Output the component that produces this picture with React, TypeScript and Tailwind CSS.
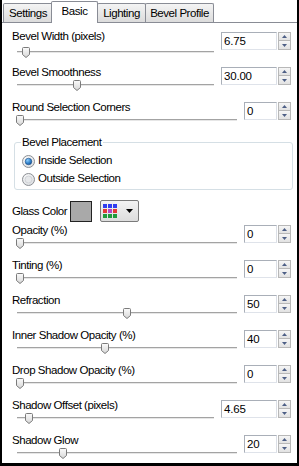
import React from 'react';

// Glass effect dialog – "Basic" page
type RowData = {
  label: string;
  value: string;
  wide?: boolean;
  thumb: number;
  first?: boolean;
};

const topRows: RowData[] = [
  { label: 'Bevel Width (pixels)', value: '6.75', wide: true, thumb: 5, first: true },
  { label: 'Bevel Smoothness', value: '30.00', wide: true, thumb: 56 },
  { label: 'Round Selection Corners', value: '0', thumb: -1 },
];

const bottomRows: RowData[] = [
  { label: 'Opacity (%)', value: '0', thumb: -1 },
  { label: 'Tinting (%)', value: '0', thumb: -1 },
  { label: 'Refraction', value: '50', thumb: 106 },
  { label: 'Inner Shadow Opacity (%)', value: '40', thumb: 84 },
  { label: 'Drop Shadow Opacity (%)', value: '0', thumb: -1 },
  { label: 'Shadow Offset (pixels)', value: '4.65', wide: true, thumb: 8 },
  { label: 'Shadow Glow', value: '20', thumb: 42 },
];

function Tab({ label, className, selected }: { label: string; className: string; selected?: boolean }) {
  if (selected) {
    return (
      <div
        className={`relative z-10 -mb-px flex h-[22px] items-center justify-center rounded-t-[2px] border-x border-t border-[#898c95] bg-white pb-[1px] ${className}`}
      >
        {label}
      </div>
    );
  }
  return (
    <div
      className={`flex h-[19px] items-center justify-center rounded-t-[2px] border-x border-t border-[#898c95] bg-gradient-to-b from-[#f4f4f4] to-[#dcdcdc] pt-[1px] ${className}`}
    >
      {label}
    </div>
  );
}

function Arrow({ up }: { up?: boolean }) {
  return (
    <svg width="5" height="3" viewBox="0 0 5 3">
      <path d={up ? 'M0 3 L2.5 0 L5 3 Z' : 'M0 0 L2.5 3 L5 0 Z'} fill="#4d5f86" />
    </svg>
  );
}

function Spinner({ value, wide, first }: { value: string; wide?: boolean; first?: boolean }) {
  return (
    <div className={`flex h-[18px] gap-[1px] ${first ? 'mt-[3px]' : 'mt-[2px]'}`}>
      <div
        className={`h-[18px] border border-[#a9afb8] border-r-[#dbdfe6] border-b-[#dfe3ea] bg-white pl-[2px] text-[11.5px] leading-[16px] tracking-[-0.2px] text-black ${wide ? 'w-[56px]' : 'w-[33px]'}`}
      >
        {value}
      </div>
      <div className="flex w-[13px] flex-col">
        <div className="flex h-[9px] items-center justify-center border border-[#b8b8b8] bg-gradient-to-b from-[#f6f6f6] to-[#e2e2e2]">
          <Arrow up />
        </div>
        <div className="flex h-[9px] items-center justify-center border border-t-0 border-[#b8b8b8] bg-gradient-to-b from-[#f6f6f6] to-[#e2e2e2]">
          <Arrow />
        </div>
      </div>
    </div>
  );
}

function Thumb() {
  return (
    <svg width="8" height="11" viewBox="0 0 8 11">
      <defs>
        <linearGradient id="tg" x1="0" y1="0" x2="0" y2="1">
          <stop offset="0" stopColor="#fbfbfb" />
          <stop offset="1" stopColor="#d6d6d6" />
        </linearGradient>
      </defs>
      <path
        d="M1.5 0.5 H6.5 A1 1 0 0 1 7.5 1.5 V7.5 L4 10.5 L0.5 7.5 V1.5 A1 1 0 0 1 1.5 0.5 Z"
        fill="url(#tg)"
        stroke="#7b7b7b"
      />
    </svg>
  );
}

function Row({ label, value, wide, thumb, first }: RowData) {
  return (
    <div className={`flex gap-[7px] ${first ? 'h-[36px]' : 'h-[35px]'}`}>
      <div className="flex-1">
        <div className="h-[14px] leading-[14px] whitespace-nowrap">{label}</div>
        <div className={`relative ml-[5px] h-[16px] ${first ? 'mt-[3px]' : ''}`}>
          <div className="absolute left-0 right-0 top-[5px] h-[2px] border-t border-b border-t-[#a3a3a3] border-b-[#e6e6e6]" />
          <div className="absolute top-[1px] flex" style={{ left: thumb }}>
            <Thumb />
          </div>
        </div>
      </div>
      <Spinner value={value} wide={wide} first={first} />
    </div>
  );
}

function Radio({ checked }: { checked?: boolean }) {
  return (
    <svg width="13" height="13" viewBox="0 0 13 13">
      <defs>
        <radialGradient id="rb" cx="0.4" cy="0.35" r="0.7">
          <stop offset="0" stopColor="#ffffff" />
          <stop offset="1" stopColor="#d9dcdf" />
        </radialGradient>
        <radialGradient id="rd" cx="0.35" cy="0.3" r="0.8">
          <stop offset="0" stopColor="#8fd0ff" />
          <stop offset="0.6" stopColor="#2f7fc8" />
          <stop offset="1" stopColor="#174b8c" />
        </radialGradient>
      </defs>
      <circle cx="6.5" cy="6.5" r="6" fill="url(#rb)" stroke="#8c8f94" />
      {checked ? (
        <circle cx="6.5" cy="6.5" r="3.3" fill="url(#rd)" stroke="#1d4f86" strokeWidth="0.6" />
      ) : (
        <circle cx="6.5" cy="6.5" r="3.5" fill="#e6e8ea" stroke="#c9ccd0" strokeWidth="0.8" />
      )}
    </svg>
  );
}

const gridColors = [
  '#2f3cf0', '#2f3cf0', '#2f3cf0',
  '#e23838', '#b544c8', '#e23838',
  '#1f9a3c', '#1f9a3c', '#1f9a3c',
];

export default function App() {
  return (
    <div className="h-[466px] w-[299px] overflow-hidden border-x-2 border-b-[3px] border-black bg-white font-['Liberation_Sans',Arial,sans-serif] text-[11.5px] tracking-[-0.45px] text-black">
      <div className="flex h-[22px] items-end pl-[1px]">
        <Tab label="Settings" className="w-[50px]" />
        <Tab label="Basic" className="-ml-[2px] w-[47px]" selected />
        <Tab label="Lighting" className="-ml-px w-[49px]" />
        <Tab label="Bevel Profile" className="-ml-px w-[69px]" />
      </div>

      <div className="border-t border-[#898c95] pl-[10px] pr-[6px] pt-[6px]">
        {topRows.map((r) => (
          <Row key={r.label} {...r} />
        ))}

        <fieldset className="-mr-[2px] ml-[2px] h-[55px] rounded-[3px] border border-[#d5dfe5] px-[6px]">
          <legend className="px-[1px] leading-[14px]">Bevel Placement</legend>
          <div className="mt-[5px] flex h-[14px] items-center gap-[3px] pl-[1px]">
            <Radio checked />
            <span>Inside Selection</span>
          </div>
          <div className="mt-[4px] flex h-[14px] items-center gap-[3px] pl-[1px]">
            <Radio />
            <span>Outside Selection</span>
          </div>
        </fieldset>

        <div className="mt-[9px] flex h-[24px] items-center">
          <span className="w-[58px] leading-[14px]">Glass Color</span>
          <div className="h-[21px] w-[22px] border border-[#222] bg-[#a9a9a9]" />
          <div className="ml-[8px] flex h-[22px] w-[39px] items-center rounded-[2px] border border-[#7a7a7a] bg-gradient-to-b from-[#f3f3f3] to-[#dddddd] pl-[2px]">
            <div className="grid grid-cols-3 gap-[1px]">
              {gridColors.map((c, i) => (
                <div key={i} className="h-[4px] w-[4px]" style={{ backgroundColor: c }} />
              ))}
            </div>
            <svg className="ml-[9px]" width="7" height="4" viewBox="0 0 7 4">
              <path d="M0 0 H7 L3.5 4 Z" fill="#000" />
            </svg>
          </div>
        </div>

        {bottomRows.map((r) => (
          <Row key={r.label} {...r} />
        ))}
      </div>
    </div>
  );
}
